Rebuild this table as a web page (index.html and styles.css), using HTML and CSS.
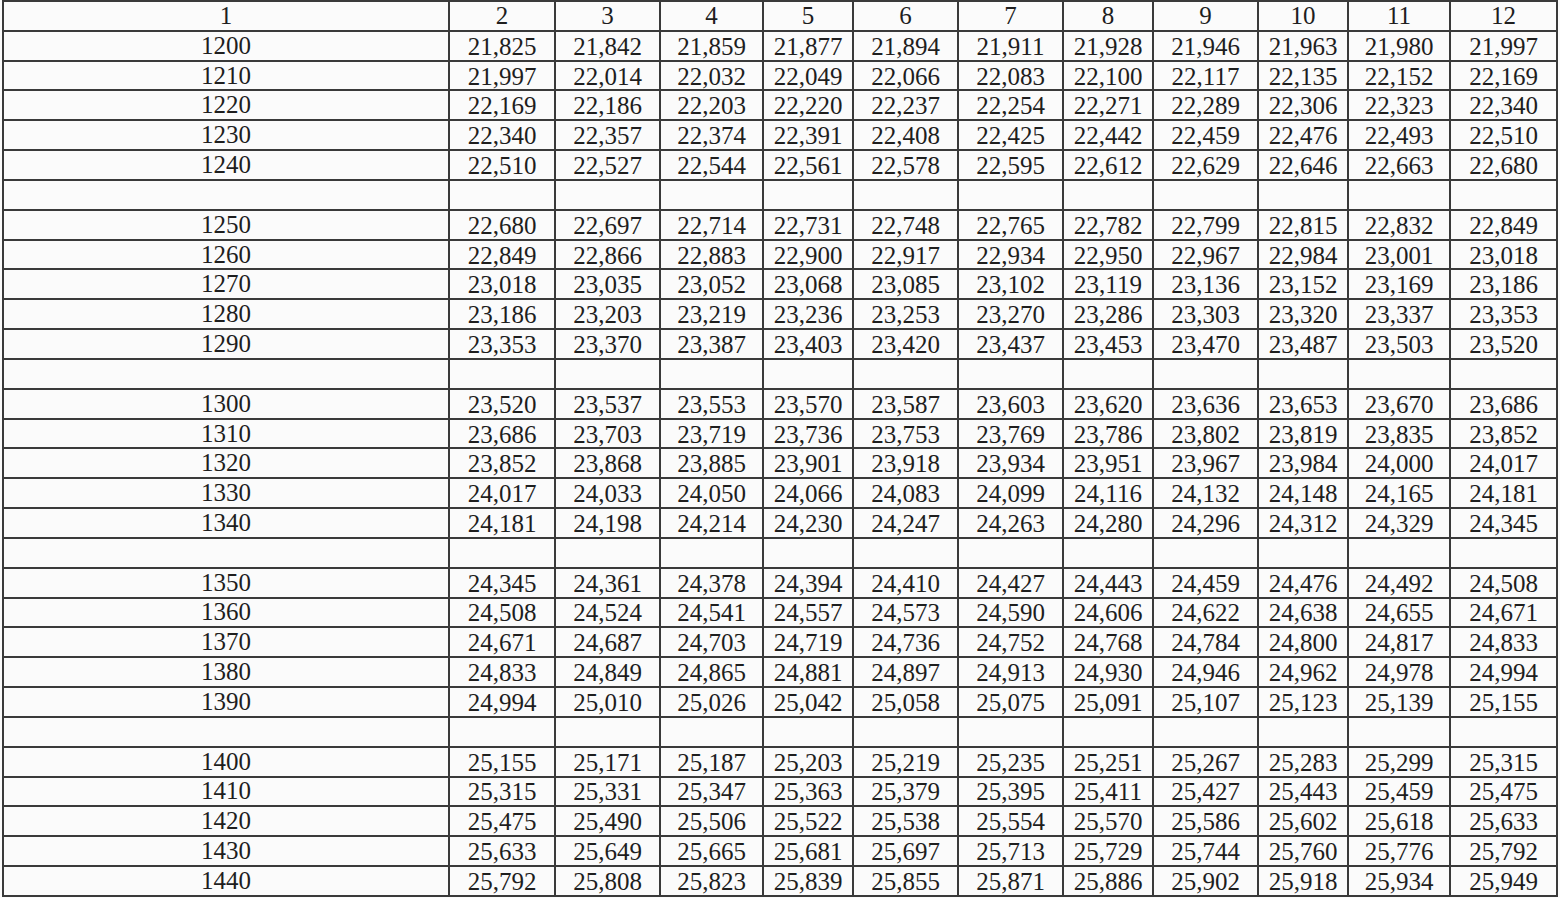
FILE: index.html
```html
<!DOCTYPE html>
<html lang="ru">
<head>
<meta charset="utf-8">
<title>Таблица</title>
<link rel="stylesheet" href="styles.css">
</head>
<body>
<table class="grid">
<colgroup>
<col class="c1"><col class="c2"><col class="c3"><col class="c4"><col class="c5"><col class="c6"><col class="c7"><col class="c8"><col class="c9"><col class="c10"><col class="c11"><col class="c12">
</colgroup>
<thead>
<tr><th>1</th><th>2</th><th>3</th><th>4</th><th>5</th><th>6</th><th>7</th><th>8</th><th>9</th><th>10</th><th>11</th><th>12</th></tr>
</thead>
<tbody>
<tr><td class="key">1200</td><td>21,825</td><td>21,842</td><td>21,859</td><td>21,877</td><td>21,894</td><td>21,911</td><td>21,928</td><td>21,946</td><td>21,963</td><td>21,980</td><td>21,997</td></tr>
<tr><td class="key">1210</td><td>21,997</td><td>22,014</td><td>22,032</td><td>22,049</td><td>22,066</td><td>22,083</td><td>22,100</td><td>22,117</td><td>22,135</td><td>22,152</td><td>22,169</td></tr>
<tr><td class="key">1220</td><td>22,169</td><td>22,186</td><td>22,203</td><td>22,220</td><td>22,237</td><td>22,254</td><td>22,271</td><td>22,289</td><td>22,306</td><td>22,323</td><td>22,340</td></tr>
<tr><td class="key">1230</td><td>22,340</td><td>22,357</td><td>22,374</td><td>22,391</td><td>22,408</td><td>22,425</td><td>22,442</td><td>22,459</td><td>22,476</td><td>22,493</td><td>22,510</td></tr>
<tr><td class="key">1240</td><td>22,510</td><td>22,527</td><td>22,544</td><td>22,561</td><td>22,578</td><td>22,595</td><td>22,612</td><td>22,629</td><td>22,646</td><td>22,663</td><td>22,680</td></tr>
<tr class="gap"><td></td><td></td><td></td><td></td><td></td><td></td><td></td><td></td><td></td><td></td><td></td><td></td></tr>
<tr><td class="key">1250</td><td>22,680</td><td>22,697</td><td>22,714</td><td>22,731</td><td>22,748</td><td>22,765</td><td>22,782</td><td>22,799</td><td>22,815</td><td>22,832</td><td>22,849</td></tr>
<tr><td class="key">1260</td><td>22,849</td><td>22,866</td><td>22,883</td><td>22,900</td><td>22,917</td><td>22,934</td><td>22,950</td><td>22,967</td><td>22,984</td><td>23,001</td><td>23,018</td></tr>
<tr><td class="key">1270</td><td>23,018</td><td>23,035</td><td>23,052</td><td>23,068</td><td>23,085</td><td>23,102</td><td>23,119</td><td>23,136</td><td>23,152</td><td>23,169</td><td>23,186</td></tr>
<tr><td class="key">1280</td><td>23,186</td><td>23,203</td><td>23,219</td><td>23,236</td><td>23,253</td><td>23,270</td><td>23,286</td><td>23,303</td><td>23,320</td><td>23,337</td><td>23,353</td></tr>
<tr><td class="key">1290</td><td>23,353</td><td>23,370</td><td>23,387</td><td>23,403</td><td>23,420</td><td>23,437</td><td>23,453</td><td>23,470</td><td>23,487</td><td>23,503</td><td>23,520</td></tr>
<tr class="gap"><td></td><td></td><td></td><td></td><td></td><td></td><td></td><td></td><td></td><td></td><td></td><td></td></tr>
<tr><td class="key">1300</td><td>23,520</td><td>23,537</td><td>23,553</td><td>23,570</td><td>23,587</td><td>23,603</td><td>23,620</td><td>23,636</td><td>23,653</td><td>23,670</td><td>23,686</td></tr>
<tr><td class="key">1310</td><td>23,686</td><td>23,703</td><td>23,719</td><td>23,736</td><td>23,753</td><td>23,769</td><td>23,786</td><td>23,802</td><td>23,819</td><td>23,835</td><td>23,852</td></tr>
<tr><td class="key">1320</td><td>23,852</td><td>23,868</td><td>23,885</td><td>23,901</td><td>23,918</td><td>23,934</td><td>23,951</td><td>23,967</td><td>23,984</td><td>24,000</td><td>24,017</td></tr>
<tr><td class="key">1330</td><td>24,017</td><td>24,033</td><td>24,050</td><td>24,066</td><td>24,083</td><td>24,099</td><td>24,116</td><td>24,132</td><td>24,148</td><td>24,165</td><td>24,181</td></tr>
<tr><td class="key">1340</td><td>24,181</td><td>24,198</td><td>24,214</td><td>24,230</td><td>24,247</td><td>24,263</td><td>24,280</td><td>24,296</td><td>24,312</td><td>24,329</td><td>24,345</td></tr>
<tr class="gap"><td></td><td></td><td></td><td></td><td></td><td></td><td></td><td></td><td></td><td></td><td></td><td></td></tr>
<tr><td class="key">1350</td><td>24,345</td><td>24,361</td><td>24,378</td><td>24,394</td><td>24,410</td><td>24,427</td><td>24,443</td><td>24,459</td><td>24,476</td><td>24,492</td><td>24,508</td></tr>
<tr><td class="key">1360</td><td>24,508</td><td>24,524</td><td>24,541</td><td>24,557</td><td>24,573</td><td>24,590</td><td>24,606</td><td>24,622</td><td>24,638</td><td>24,655</td><td>24,671</td></tr>
<tr><td class="key">1370</td><td>24,671</td><td>24,687</td><td>24,703</td><td>24,719</td><td>24,736</td><td>24,752</td><td>24,768</td><td>24,784</td><td>24,800</td><td>24,817</td><td>24,833</td></tr>
<tr><td class="key">1380</td><td>24,833</td><td>24,849</td><td>24,865</td><td>24,881</td><td>24,897</td><td>24,913</td><td>24,930</td><td>24,946</td><td>24,962</td><td>24,978</td><td>24,994</td></tr>
<tr><td class="key">1390</td><td>24,994</td><td>25,010</td><td>25,026</td><td>25,042</td><td>25,058</td><td>25,075</td><td>25,091</td><td>25,107</td><td>25,123</td><td>25,139</td><td>25,155</td></tr>
<tr class="gap"><td></td><td></td><td></td><td></td><td></td><td></td><td></td><td></td><td></td><td></td><td></td><td></td></tr>
<tr><td class="key">1400</td><td>25,155</td><td>25,171</td><td>25,187</td><td>25,203</td><td>25,219</td><td>25,235</td><td>25,251</td><td>25,267</td><td>25,283</td><td>25,299</td><td>25,315</td></tr>
<tr><td class="key">1410</td><td>25,315</td><td>25,331</td><td>25,347</td><td>25,363</td><td>25,379</td><td>25,395</td><td>25,411</td><td>25,427</td><td>25,443</td><td>25,459</td><td>25,475</td></tr>
<tr><td class="key">1420</td><td>25,475</td><td>25,490</td><td>25,506</td><td>25,522</td><td>25,538</td><td>25,554</td><td>25,570</td><td>25,586</td><td>25,602</td><td>25,618</td><td>25,633</td></tr>
<tr><td class="key">1430</td><td>25,633</td><td>25,649</td><td>25,665</td><td>25,681</td><td>25,697</td><td>25,713</td><td>25,729</td><td>25,744</td><td>25,760</td><td>25,776</td><td>25,792</td></tr>
<tr><td class="key">1440</td><td>25,792</td><td>25,808</td><td>25,823</td><td>25,839</td><td>25,855</td><td>25,871</td><td>25,886</td><td>25,902</td><td>25,918</td><td>25,934</td><td>25,949</td></tr>
</tbody>
</table>
</body>
</html>
```
FILE: styles.css
```css
html, body {
  margin: 0;
  padding: 0;
  background: #fbfbfb;
}

body {
  font-family: "Liberation Serif", "Times New Roman", serif;
  color: #1e1e1e;
}

.grid {
  margin: 0 0 0 2px;
  border-collapse: collapse;
  table-layout: fixed;
  width: 1556px;
  font-size: 25px;
}

.c1 { width: 446px; }
.c2 { width: 106px; }
.c3 { width: 105px; }
.c4 { width: 103px; }
.c5 { width: 90px; }
.c6 { width: 105px; }
.c7 { width: 105px; }
.c8 { width: 90px; }
.c9 { width: 105px; }
.c10 { width: 90px; }
.c11 { width: 102px; }
.c12 { width: 107px; }

.grid th,
.grid td {
  border: 2px solid #3a3a3a;
  padding: 0;
  text-align: center;
  vertical-align: middle;
  font-weight: normal;
  line-height: 22px;
  white-space: nowrap;
}

.grid tr {
  height: 29.83px;
}

.grid td {
  padding-top: 2px;
}

.grid td.key {
  padding-top: 0;
}
```
